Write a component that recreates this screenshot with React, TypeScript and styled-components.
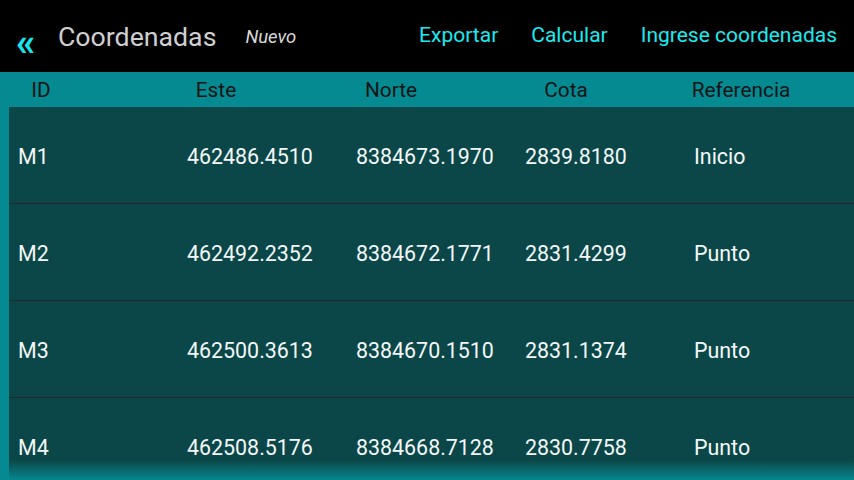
import React from "react";
import styled, { createGlobalStyle } from "styled-components";

interface IPoint {
  id: string;
  este: string;
  norte: string;
  cota: string;
  referencia: string;
}

const points: IPoint[] = [
  { id: "M1", este: "462486.4510", norte: "8384673.1970", cota: "2839.8180", referencia: "Inicio" },
  { id: "M2", este: "462492.2352", norte: "8384672.1771", cota: "2831.4299", referencia: "Punto" },
  { id: "M3", este: "462500.3613", norte: "8384670.1510", cota: "2831.1374", referencia: "Punto" },
  { id: "M4", este: "462508.5176", norte: "8384668.7128", cota: "2830.7758", referencia: "Punto" },
];

const headers = ["ID", "Este", "Norte", "Cota", "Referencia"];

function App() {
  return (
    <>
      <GlobalStyle />
      <Screen>
        <TopBar>
          <BackButton>«</BackButton>
          <Title>Coordenadas</Title>
          <Subtitle>Nuevo</Subtitle>
          <Actions>
            <Action>Exportar</Action>
            <Action>Calcular</Action>
            <Action>Ingrese coordenadas</Action>
          </Actions>
        </TopBar>
        <HeaderRow>
          {headers.map((h) => (
            <HeaderCell key={h}>{h}</HeaderCell>
          ))}
        </HeaderRow>
        <Body>
          <List>
            {points.map((p) => (
              <Row key={p.id}>
                <Cell>{p.id}</Cell>
                <Cell>{p.este}</Cell>
                <Cell>{p.norte}</Cell>
                <Cell>{p.cota}</Cell>
                <Cell>{p.referencia}</Cell>
              </Row>
            ))}
          </List>
          <BottomFade />
        </Body>
      </Screen>
    </>
  );
}

const GlobalStyle = createGlobalStyle`
  html, body {
    margin: 0;
    padding: 0;
    background: #000;
    overflow: hidden;
  }
  * {
    box-sizing: border-box;
  }
`;

const Screen = styled.div`
  width: 854px;
  height: 480px;
  display: flex;
  flex-direction: column;
  font-family: Roboto, "Noto Sans", sans-serif;
  background: #000;
  overflow: hidden;
`;

const TopBar = styled.div`
  height: 72px;
  display: flex;
  align-items: center;
  padding: 0 17px 0 16px;
  background: #000;
`;

const BackButton = styled.span`
  color: #18e6ec;
  font-size: 39px;
  font-weight: 700;
  line-height: 1;
  margin-top: 13px;
  width: 42px;
`;

const Title = styled.span`
  color: #cfcfcf;
  font-size: 26.7px;
  margin-top: 1px;
`;

const Subtitle = styled.span`
  color: #d8d8d8;
  font-size: 18.5px;
  font-style: italic;
  margin-left: 29px;
  margin-top: 1px;
`;

const Actions = styled.div`
  margin-left: auto;
  display: flex;
  gap: 33px;
  margin-top: -3px;
`;

const Action = styled.span`
  color: #1ceaf0;
  font-size: 21px;
`;

const HeaderRow = styled.div`
  height: 35px;
  display: grid;
  grid-template-columns: repeat(5, 82px);
  column-gap: 93px;
  justify-items: center;
  align-items: center;
  background: #058a92;
`;

const HeaderCell = styled.span`
  color: #0d1415;
  font-size: 20.8px;
  white-space: nowrap;
  margin-top: 1px;
`;

const Body = styled.div`
  position: relative;
  flex: 1;
  display: flex;
  background: #058a92;
  padding-left: 9px;
  overflow: hidden;
`;

const List = styled.div`
  flex: 1;
  background: #0b4748;
  display: flex;
  flex-direction: column;
`;

const Row = styled.div`
  flex: 0 0 97px;
  display: grid;
  grid-template-columns: repeat(5, 169px);
  align-items: center;
  padding-left: 9px;
  border-bottom: 1px solid #262627;
`;

const Cell = styled.span`
  color: #f4f7f7;
  font-size: 21.4px;
  white-space: nowrap;
  margin-top: 2px;
`;

const BottomFade = styled.div`
  position: absolute;
  left: 0;
  right: 0;
  bottom: 0;
  height: 20px;
  background: linear-gradient(to bottom, rgba(5, 138, 146, 0), rgba(5, 138, 146, 0.95));
`;

export default App;
